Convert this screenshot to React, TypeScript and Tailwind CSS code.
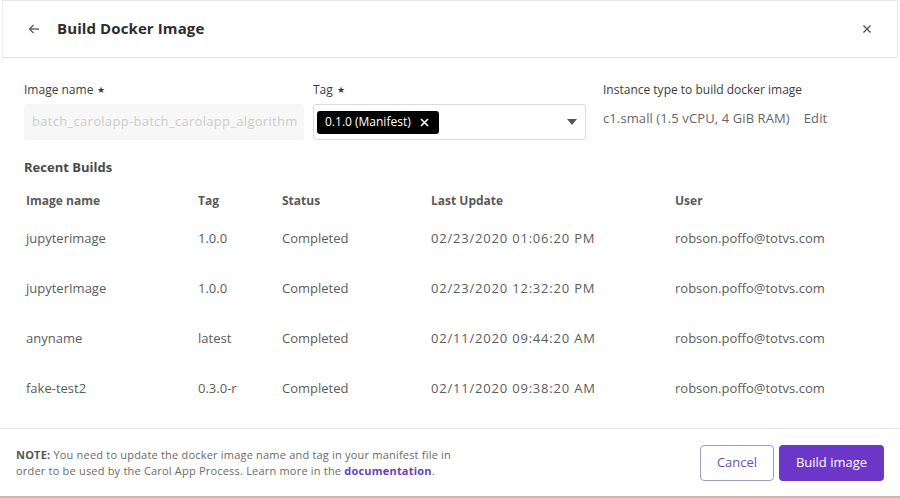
import React from "react";

const rows = [
  { name: "jupyterimage", tag: "1.0.0", status: "Completed", date: "02/23/2020 01:06:20 PM", user: "robson.poffo@totvs.com" },
  { name: "jupyterImage", tag: "1.0.0", status: "Completed", date: "02/23/2020 12:32:20 PM", user: "robson.poffo@totvs.com" },
  { name: "anyname", tag: "latest", status: "Completed", date: "02/11/2020 09:44:20 AM", user: "robson.poffo@totvs.com" },
  { name: "fake-test2", tag: "0.3.0-r", status: "Completed", date: "02/11/2020 09:38:20 AM", user: "robson.poffo@totvs.com" },
];

export default function App() {
  return (
    <div className="w-[900px] h-[498px] bg-white flex flex-col text-[#5a5a5a]" style={{ fontFamily: "'Open Sans', 'Liberation Sans', sans-serif" }}>
      <div className="h-[58px] mx-[2px] border border-t-[#e6e6e6] border-x-[#ececec] border-b-[#e2e2e2] flex items-center shrink-0">
        <div className="w-[30px] ml-[24px] flex items-center">
          <svg width="14" height="14" viewBox="0 0 14 14" fill="none" stroke="#666" strokeWidth="1.5">
            <path d="M12 7H2.5M6.5 3L2.5 7l4 4" />
          </svg>
        </div>
        <div className="text-[15px] font-bold text-[#2d2d2d] tracking-[0.1px] mt-[-2px]">Build Docker Image</div>
        <div className="ml-auto mr-[24px]">
          <svg width="12" height="12" viewBox="0 0 12 12" stroke="#555" strokeWidth="1.4">
            <path d="M2.5 2.5l7 7M9.5 2.5l-7 7" />
          </svg>
        </div>
      </div>

      <div className="flex-1 px-[24px] pt-[24px]">
        <div className="flex">
          <div className="w-[289px] flex flex-col">
            <div className="text-[12px] text-[#3c3c3c] h-[16px] leading-[16px] flex items-center gap-[4px]">Image name <span className="text-[9px]">★</span></div>
            <div className="mt-[6px] w-[280px] h-[36px] bg-[#f7f7f7] rounded-[3px] flex items-center px-[8px] text-[13px] tracking-[0.3px] text-[#cdcdcd] overflow-hidden whitespace-nowrap">batch_carolapp-batch_carolapp_algorithm</div>
          </div>
          <div className="w-[290px] flex flex-col">
            <div className="text-[12px] text-[#3c3c3c] h-[16px] leading-[16px] flex items-center gap-[4px]">Tag <span className="text-[9px]">★</span></div>
            <div className="mt-[6px] w-[273px] h-[36px] border border-[#dcdcdc] rounded-[3px] flex items-center pl-[3px] pr-[8px]">
              <div className="h-[23px] bg-black text-white rounded-[3px] text-[12px] flex items-center pl-[8px] pr-[10px] gap-[9px]">
                <span>0.1.0 (Manifest)</span>
                <svg width="9" height="9" viewBox="0 0 9 9" stroke="#fff" strokeWidth="1.6"><path d="M1 1l7 7M8 1L1 8" /></svg>
              </div>
              <svg className="ml-auto" width="10" height="6" viewBox="0 0 10 6"><path d="M0 0h10L5 6z" fill="#555" /></svg>
            </div>
          </div>
          <div className="flex flex-col">
            <div className="text-[12px] text-[#3c3c3c] h-[16px] leading-[16px]">Instance type to build docker image</div>
            <div className="mt-[6px] h-[36px] pb-[6px] flex items-center text-[13px] tracking-[0.1px] text-[#666] gap-[14px]">
              <span>c1.small (1.5 vCPU, 4 GiB RAM)</span>
              <span>Edit</span>
            </div>
          </div>
        </div>

        <div className="mt-[18px] text-[13px] font-bold text-[#4a4a4a]">Recent Builds</div>

        <div className="mt-[12px] ml-[2px]">
          <div className="flex h-[22px] items-center text-[12px] font-bold text-[#5a5a5a]">
            <div className="w-[172px]">Image name</div>
            <div className="w-[84px]">Tag</div>
            <div className="w-[149px]">Status</div>
            <div className="w-[244px]">Last Update</div>
            <div>User</div>
          </div>
          {rows.map((r, i) => (
            <div key={r.date} className={`flex h-[50px] items-center text-[13px] text-[#5c5c5c] ${i === 0 ? "mt-[2px]" : ""}`}>
              <div className="w-[172px]">{r.name}</div>
              <div className="w-[84px]">{r.tag}</div>
              <div className="w-[149px]">{r.status}</div>
              <div className="w-[244px] tracking-[0.8px]">{r.date}</div>
              <div>{r.user}</div>
            </div>
          ))}
        </div>
      </div>

      <div className="h-[70px] border-t border-[#e4e4e4] border-b-2 border-b-[#bdbdbd] flex items-center px-[16px] shrink-0">
        <div className="text-[11px] leading-[16px] tracking-[0.2px] text-[#6a6a6a] w-[462px]">
          <span className="font-bold text-[#555]">NOTE:</span> You need to update the docker image name and tag in your manifest file in order to be used by the Carol App Process. Learn more in the <span className="font-bold text-[#6a3fb5]">documentation</span>.
        </div>
        <div className="ml-auto flex gap-[5px]">
          <button className="w-[74px] h-[36px] border border-[#a49ac0] rounded-[4px] text-[13px] text-[#6a4fb0] bg-white">Cancel</button>
          <button className="w-[105px] h-[36px] rounded-[4px] text-[13px] text-white bg-[#6c37c9]">Build image</button>
        </div>
      </div>
    </div>
  );
}
